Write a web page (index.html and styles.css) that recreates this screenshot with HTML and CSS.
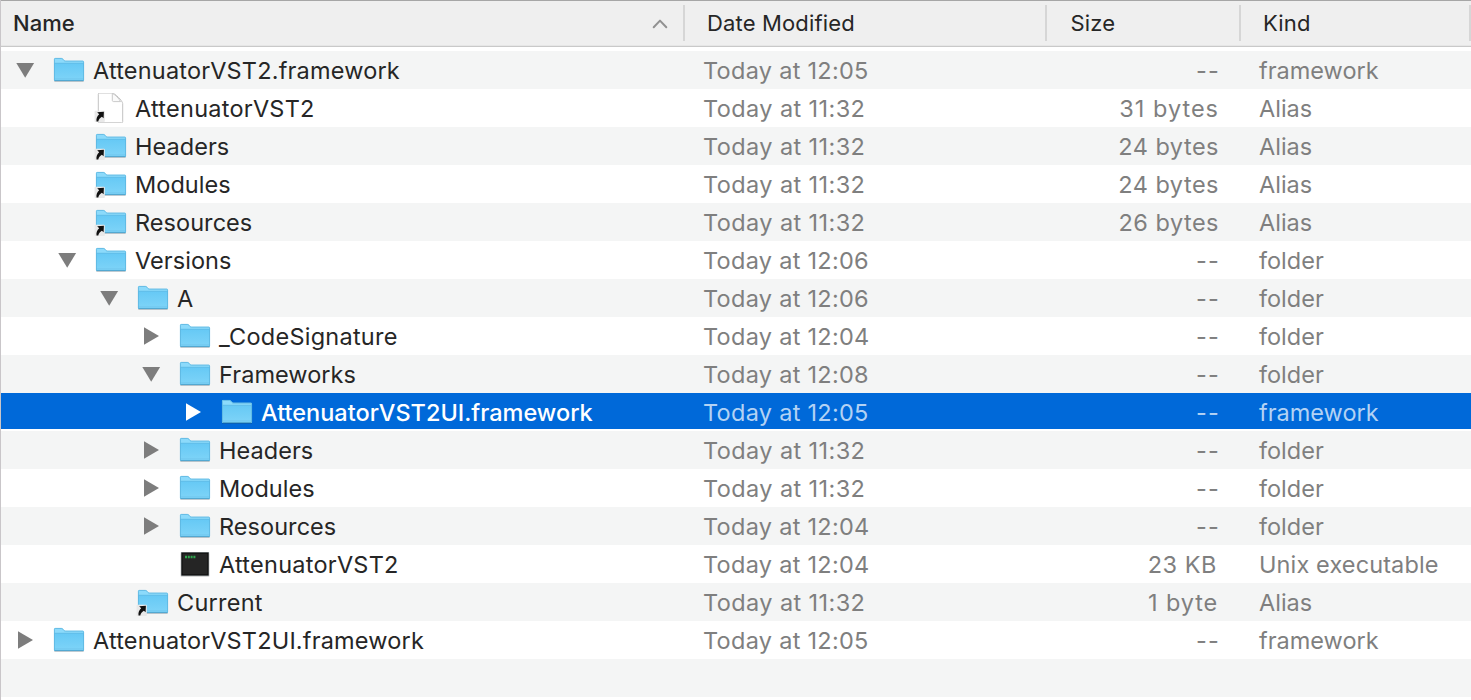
FILE: index.html
```html
<!DOCTYPE html>
<html lang="en">
<head>
<meta charset="utf-8">
<title>Attenuator</title>
<link rel="stylesheet" href="styles.css">
</head>
<body>
<svg class="defs" aria-hidden="true">
  <defs>
    <linearGradient id="body" x1="0" y1="0" x2="0" y2="1">
      <stop offset="0" stop-color="#66c9f5"/><stop offset="1" stop-color="#7fd4f8"/>
    </linearGradient>
    <symbol id="folder" viewBox="0 0 34 30">
      <path d="M2.3 26.2h29.4" stroke="#000" stroke-opacity=".18" stroke-width="1.6"/>
      <path d="M2 4.2C2 3.4 2.5 3 3.3 3h6.1c.8 0 1.2.3 1.7.9l1 1.2c.4.5.8.7 1.5.7h17c.9 0 1.4.5 1.4 1.3V25c0 .7-.4 1-1 1H3c-.6 0-1-.3-1-1z" fill="#8cdafb"/>
      <path d="M2 8.4h30V25c0 .7-.4 1-1 1H3c-.6 0-1-.3-1-1z" fill="url(#body)"/>
      <path d="M2.4 8.3h29.2" stroke="#55b5e2" stroke-width=".8"/>
      <path d="M2.4 24h29.2" stroke="#6cc2e9" stroke-width=".7"/>
      <path d="M2.4 4.4c0-.7.4-1 1-1h6c.7 0 1 .2 1.5.8l1 1.2c.4.5.9.7 1.6.7h17c.7 0 1.1.4 1.1 1V25c0 .4-.3.6-.7.6H3.1c-.4 0-.7-.2-.7-.6z" fill="none" stroke="#5ab4dd" stroke-width=".8"/>
      <path d="M2.6 25.6h28.8" stroke="#4d9fc8" stroke-width=".8"/>
    </symbol>
    <symbol id="badge" viewBox="0 0 34 30">
      <path d="M1.400 18.500h8.600v9.800H1.400z" fill="#e9e9e9" stroke="#e9e9e9" stroke-width="1.600" stroke-linejoin="round"/>
      <path d="M2.500 28.500c-.3-3.200.5-5.300 2.700-7.300l-2-1.900 6.700-.5-.3 6.500-1.700-1.600c-2 1.200-3.200 2.500-3.600 4.800z" fill="#111"/>
    </symbol>
    <symbol id="alias-folder" viewBox="0 0 34 30"><use href="#folder"/><use href="#badge"/></symbol>
    <symbol id="alias-file" viewBox="0 0 34 30">
      <path d="M5.500 0h12.700c2.600.2 10.300 7.600 10.500 10.600v18c0 .9-.4 1.200-1.200 1.200h-22c-.8 0-1.200-.4-1.200-1.200V1.200C4.300.400 4.700.1 5.500.1z" fill="#fff" stroke="#c2c2c2" stroke-width="1"/>
      <path d="M18.300.4v6.800c0 1 .4 1.400 1.300 1.400h6.900C25.300 5.800 21 1.400 18.300.4z" fill="#fafafa" stroke="#c4c4c4" stroke-width=".9"/>
      <use href="#badge"/>
    </symbol>
    <symbol id="exec" viewBox="0 0 34 30">
      <rect x="2.600" y="4" width="28.800" height="24" rx="1" fill="#000" opacity=".15"/>
      <rect x="3.300" y="3.500" width="27.400" height="23" fill="#252525" stroke="#8d979b" stroke-width=".8"/>
      <rect x="4" y="4.100" width="26" height="21.800" fill="none" stroke="#0c0c0c" stroke-width="1"/>
      <path d="M7 8h10.600" stroke="#30a64e" stroke-width="2.400" stroke-dasharray="2 .8"/>
    </symbol>
    <symbol id="open" viewBox="0 0 20 20"><path d="M1.300 3h17.800L10.200 17.700z"/></symbol>
    <symbol id="closed" viewBox="0 0 20 20"><path d="M3 1.300v17.500L18 10z"/></symbol>
  </defs>
</svg>

<div class="list">
  <div class="head">
    <div class="col sorted">Name<svg class="sort" viewBox="0 0 16 12"><path d="M1.700 9.200 8 2.600l6.300 6.600"/></svg></div>
    <div class="col">Date Modified</div>
    <div class="col bytes">Size</div>
    <div class="col">Kind</div>
    <div class="col end"></div>
  </div>
  <div class="rows">
    <div class="row"><div class="name"><svg class="tri"><use href="#open"/></svg><svg class="icon"><use href="#folder"/></svg><span class="bundle">AttenuatorVST2.framework</span></div><div class="date">Today at 12:05</div><div class="size none">--</div><div class="kind tight">framework</div></div>
    <div class="row"><div class="name d1"><span class="tri"></span><svg class="icon"><use href="#alias-file"/></svg><span class="wide">AttenuatorVST2</span></div><div class="date ones">Today at 11:32</div><div class="size">31 bytes</div><div class="kind">Alias</div></div>
    <div class="row"><div class="name d1"><span class="tri"></span><svg class="icon"><use href="#alias-folder"/></svg><span>Headers</span></div><div class="date ones">Today at 11:32</div><div class="size even">24 bytes</div><div class="kind">Alias</div></div>
    <div class="row"><div class="name d1"><span class="tri"></span><svg class="icon"><use href="#alias-folder"/></svg><span>Modules</span></div><div class="date ones">Today at 11:32</div><div class="size even">24 bytes</div><div class="kind">Alias</div></div>
    <div class="row"><div class="name d1"><span class="tri"></span><svg class="icon"><use href="#alias-folder"/></svg><span>Resources</span></div><div class="date ones">Today at 11:32</div><div class="size even">26 bytes</div><div class="kind">Alias</div></div>
    <div class="row"><div class="name d1"><svg class="tri"><use href="#open"/></svg><svg class="icon"><use href="#folder"/></svg><span>Versions</span></div><div class="date">Today at 12:06</div><div class="size none">--</div><div class="kind">folder</div></div>
    <div class="row"><div class="name d2"><svg class="tri"><use href="#open"/></svg><svg class="icon"><use href="#folder"/></svg><span>A</span></div><div class="date">Today at 12:06</div><div class="size none">--</div><div class="kind">folder</div></div>
    <div class="row"><div class="name d3"><svg class="tri"><use href="#closed"/></svg><svg class="icon"><use href="#folder"/></svg><span class="wide">_CodeSignature</span></div><div class="date">Today at 12:04</div><div class="size none">--</div><div class="kind">folder</div></div>
    <div class="row"><div class="name d3"><svg class="tri"><use href="#open"/></svg><svg class="icon"><use href="#folder"/></svg><span>Frameworks</span></div><div class="date">Today at 12:08</div><div class="size none">--</div><div class="kind">folder</div></div>
    <div class="row selected"><div class="name d4"><svg class="tri"><use href="#closed"/></svg><svg class="icon"><use href="#folder"/></svg><span>AttenuatorVST2UI.framework</span></div><div class="date">Today at 12:05</div><div class="size none">--</div><div class="kind tight">framework</div></div>
    <div class="row"><div class="name d3"><svg class="tri"><use href="#closed"/></svg><svg class="icon"><use href="#folder"/></svg><span>Headers</span></div><div class="date ones">Today at 11:32</div><div class="size none">--</div><div class="kind">folder</div></div>
    <div class="row"><div class="name d3"><svg class="tri"><use href="#closed"/></svg><svg class="icon"><use href="#folder"/></svg><span>Modules</span></div><div class="date ones">Today at 11:32</div><div class="size none">--</div><div class="kind">folder</div></div>
    <div class="row"><div class="name d3"><svg class="tri"><use href="#closed"/></svg><svg class="icon"><use href="#folder"/></svg><span>Resources</span></div><div class="date">Today at 12:04</div><div class="size none">--</div><div class="kind">folder</div></div>
    <div class="row"><div class="name d3"><span class="tri"></span><svg class="icon"><use href="#exec"/></svg><span class="wide">AttenuatorVST2</span></div><div class="date">Today at 12:04</div><div class="size kb">23 KB</div><div class="kind unix">Unix executable</div></div>
    <div class="row"><div class="name d2"><span class="tri"></span><svg class="icon"><use href="#alias-folder"/></svg><span class="wide">Current</span></div><div class="date ones">Today at 11:32</div><div class="size single">1 byte</div><div class="kind">Alias</div></div>
    <div class="row"><div class="name"><svg class="tri"><use href="#closed"/></svg><svg class="icon"><use href="#folder"/></svg><span class="bundle">AttenuatorVST2UI.framework</span></div><div class="date">Today at 12:05</div><div class="size none">--</div><div class="kind tight">framework</div></div>
    <div class="row"></div>
  </div>
</div>
</body>
</html>
```
FILE: styles.css
```css
* { box-sizing: border-box; }
body { margin: 0; background: #fff; font-family: "Inter", "Liberation Sans", sans-serif; overflow: hidden; }
.defs { display: block; width: 0; height: 0; }

.list { height: 700px; border-left: 1px solid #c9c6c9; }

.head {
  display: grid;
  grid-template-columns: 682px 362px 194px 230px 2px;
  height: 47px;
  background: #efefef;
  border-top: 1px solid #a6a6a6;
  border-bottom: 1px solid #c9c9c9;
  box-shadow: inset 0 -1px #e6e6e6;
  font-size: 22px;
  line-height: 44px;
  letter-spacing: .15px;
  color: #262626;
}
.col { padding-left: 24px; background: linear-gradient(#d6d6d6, #d6d6d6) 0 4px / 2px 36px no-repeat; }
.col.bytes { padding-left: 25.5px; }
.col.sorted { display: flex; align-items: flex-start; justify-content: space-between; padding: 0 15px 0 12px; background: none; font-weight: 500; letter-spacing: 0; }
.col.end { padding: 0; }
.sort { width: 16px; height: 12px; margin-top: 17px; fill: none; stroke: #919191; stroke-width: 2; stroke-linecap: round; stroke-linejoin: round; }

.rows { padding-top: 4px; }
.row {
  display: grid;
  grid-template-columns: 702px 300px 215px 1fr;
  height: 38px;
  font-size: 23.5px;
  line-height: 40px;
  color: #7f7f7f;
  white-space: nowrap;
}
.row:nth-child(odd) { background: #f4f5f5; }
.row.selected { height: 36px; margin-bottom: 2px; background: #0069d9; color: #b3d2f4; }

.name { display: flex; align-items: flex-start; padding-left: 14px; color: #262626; letter-spacing: .05px; }
.name.d1 { padding-left: 56px; }
.name.d2 { padding-left: 98px; }
.name.d3 { padding-left: 140px; }
.name.d4 { padding-left: 182px; }
.tri { flex: none; width: 20px; height: 20px; margin: 9px 17px 0 0; fill: #7d7d7d; }
.icon { flex: none; width: 34px; height: 30px; margin: 4px 7px 0 0; overflow: visible; }
.name .wide { letter-spacing: .25px; }
.name .bundle { letter-spacing: .18px; }
.selected .name { color: #fff; font-weight: 500; }
.selected .name span { letter-spacing: 0; }
.selected .tri { fill: #fff; }

.date { letter-spacing: .28px; }
.date.ones { letter-spacing: .4px; }
.size { text-align: right; letter-spacing: 1px; margin-right: -2px; padding-right: 1px; }
.size.even { letter-spacing: .5px; }
.size.kb { letter-spacing: .55px; padding-right: 3px; }
.size.single { letter-spacing: .85px; padding-right: 2px; }
.size.none { letter-spacing: 1.2px; padding-right: 0; }
.kind { padding-left: 41px; }
.kind.tight { letter-spacing: 0; }
.kind.unix { letter-spacing: .12px; }
```
